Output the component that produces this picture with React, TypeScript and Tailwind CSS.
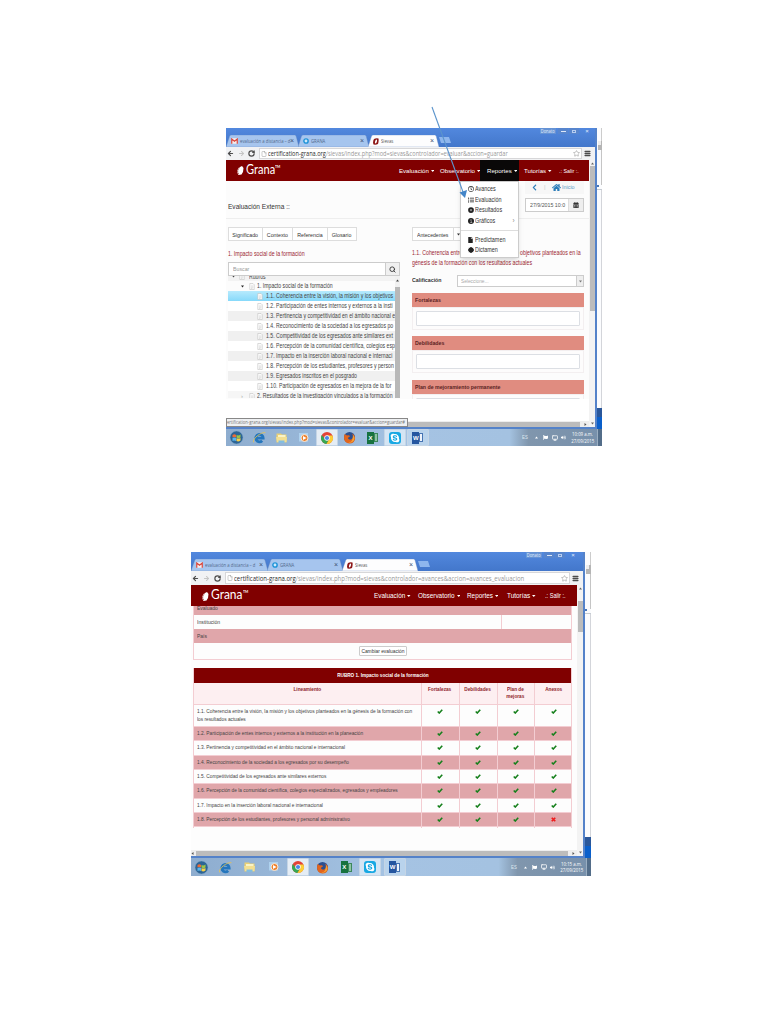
import React from 'react';
import { FaHome, FaCalendarAlt, FaSkype, FaListUl, FaFile, FaCertificate, FaChevronLeft, FaRegClock, FaFlag, FaVolumeUp } from 'react-icons/fa';
import { ArrowLeft, ArrowRight, RotateCw, Menu, Star, Search, File, Monitor } from 'lucide-react';

const cx = (...c: (string | false | undefined)[]) => c.filter(Boolean).join(' ');

/** Condensed run of text: keeps its height and narrows the glyphs. */
function T({ children, className = 'scale-x-[.87]', center }: { children: React.ReactNode; className?: string; center?: boolean }) {
  return <span className={cx('inline-block whitespace-nowrap', center ? 'origin-center' : 'origin-left', className)}>{children}</span>;
}

function Tab({ icon, label, active, className }: { icon: React.ReactNode; label: string; active?: boolean; className: string }) {
  return (
    <div className={cx('relative flex h-[12px] shrink-0 items-center', className)}>
      <svg className="absolute inset-0 h-full w-full" viewBox="0 0 100 12" preserveAspectRatio="none">
        <path d="M0 12L5 1Q6 0 7 0H94Q95 0 96 1L100 12Z" fill={active ? '#fdfdfe' : '#a6c5ee'} stroke="#6386bd" strokeWidth=".4" />
      </svg>
      <div className="relative flex w-full items-center gap-[2px] pl-[5px] pr-[5px]">
        {icon}
        <span className={cx('w-0 flex-1 font-["Open_Sans",sans-serif] text-[5.400px] leading-[8px]', active ? 'text-[#555]' : 'text-[#52698c]')}><T className="scale-x-[.79]">{label}</T></span>
        <span className="text-[7px] leading-[8px] text-[#41536f]">×</span>
      </div>
    </div>
  );
}

function GmailIcon() {
  return (
    <svg className="h-[6px] w-[7px] shrink-0" viewBox="0 0 14 11"><path d="M1 0h12v11H1z" fill="#f7eeee" /><path d="M1.500 11V1.500L7 6l5.500-4.500V11" fill="none" stroke="#d9473d" strokeWidth="2.400" /></svg>
  );
}
function RingIcon() {
  return (
    <svg className="h-[6px] w-[6px] shrink-0" viewBox="0 0 12 12"><circle cx="6" cy="6" r="4.300" fill="#cfe9fb" stroke="#1c92d8" strokeWidth="2.800" /></svg>
  );
}
function SeedIcon() {
  return (
    <svg className="h-[7px] w-[6px] shrink-0" viewBox="0 0 12 14"><path d="M2 2Q6 0 11 1Q12 6 10 12Q6 14 1 13Q-1 7 2 2Z" fill="#8d1717" /><ellipse cx="6" cy="7" rx="1.800" ry="4" transform="rotate(18 6 7)" fill="#fff" /></svg>
  );
}

function Chrome({ large, url }: { large?: boolean; url: string }) {
  return (
    <>
      <div className="flex h-[19px] items-end bg-linear-to-b from-[#5288de] to-[#4377cb]">
        <div className="flex items-end">
          <Tab icon={<GmailIcon />} label="evaluación a distancia – d" className={large ? 'w-[77px]' : 'w-[73px]'} />
          <Tab icon={<RingIcon />} label="GRANA" className={large ? '-ml-[1px] w-[76px]' : '-ml-[1px] w-[71px]'} />
          <Tab icon={<SeedIcon />} label="Sievas" active className={large ? '-ml-[1px] w-[76px]' : '-ml-[1px] w-[71px]'} />
          <svg className="mb-[4px] h-[6px] w-[13px]" viewBox="0 0 13 6"><path d="M0 0h10l2 6H2z" fill="#8eb6ed" /></svg>
        </div>
        <div className={cx('ml-auto flex h-[6px] gap-[1px] self-start text-[5px] leading-[6px] text-[#e6effc]', large ? 'mr-[3px]' : 'mr-[1px]')}>
          <span className="flex w-[16px] justify-center bg-[#6593d5] font-['Open_Sans',sans-serif]"><T center className="scale-x-[.8]">Donato</T></span>
          <span className="ml-[1px] flex w-[10px] items-end justify-center bg-[#5785cd] pb-[2px]"><i className="block h-[1px] w-[5px] bg-[#dce7f8]" /></span>
          <span className="flex w-[10px] items-center justify-center bg-[#5785cd]"><i className="block h-[3px] w-[4px] border border-[#b7cdf0]" /></span>
          <span className="w-[14px] text-center text-[6px]">×</span>
        </div>
      </div>
      <div className={cx('flex items-center bg-[#f1f2f4] text-[#4c4c4c]', large ? 'h-[14px]' : 'h-[13px]')}>
        <ArrowLeft className="ml-[1px] h-[7px] w-[7px]" strokeWidth={4} />
        <ArrowRight className="ml-[4px] h-[7px] w-[7px] text-[#c5c5c5]" strokeWidth={3.5} />
        <RotateCw className={cx('h-[7px] w-[7px]', large ? 'ml-[4px]' : 'ml-[3px]')} strokeWidth={4} />
        <div className={cx('flex flex-1 items-center border border-[#d7d7d9] bg-white', large ? 'ml-[4px] h-[12px]' : 'ml-[4px] h-[11px]')}>
          <File className="ml-[1px] h-[6px] w-[6px] shrink-0 text-[#999]" />
          <span className={cx('ml-[1px] w-0 flex-1 font-["Open_Sans","Noto_Sans",sans-serif] leading-[9px] text-[#999]', large ? 'text-[6.700px]' : 'text-[6.400px]')}>
            <T className={large ? 'scale-x-[.895]' : 'scale-x-[.878]'}><span className="text-[#2c2c2c]">certification-grana.org</span>{url}</T>
          </span>
          <Star className="mr-[1px] h-[7px] w-[7px] shrink-0 text-[#999]" />
        </div>
        <Menu className="ml-[2px] mr-[4px] h-[7px] w-[7px]" strokeWidth={5} />
      </div>
    </>
  );
}

function Logo({ large }: { large?: boolean }) {
  return (
    <div className="flex items-center pl-[11px] text-white">
      <svg className={cx('h-[9px] w-[7px]', large && 'mt-[1px]')} viewBox="0 0 14 18"><path d="M4 3L10 0L13 4L12 12L9 17L3 18L1 14L1 8Z" fill="#fff" /><path d="M4 3l2 1M2 7l2 1M1 11l2 1M2 15l2 0" stroke="#800000" /></svg>
      <span className={cx('ml-[2px] font-[Lato,sans-serif] leading-[14px]', large ? 'w-[32px]' : 'w-[29px]')}>
        <T className={large ? 'scale-x-[.92] text-[13px]' : 'scale-x-[.88] text-[12.600px]'}>Grana</T>
      </span>
      <span className="-mt-[8px] font-[Lato,sans-serif] text-[4px] leading-[5px] font-bold"><T className="scale-x-[.85]">TM</T></span>
    </div>
  );
}

function NavItem({ label, className, caret = true }: { label: string; className: string; caret?: boolean }) {
  return (
    <div className={cx('flex h-full items-center gap-[2px] whitespace-nowrap text-white', className)}>
      <span className={caret ? '' : 'origin-left scale-x-[.88]'}>{label}</span>
      {caret && <svg className="h-[2px] w-[3.500px]" viewBox="0 0 7 4"><path d="M0 0h7L3.500 4z" fill="#fff" /></svg>}
    </div>
  );
}

function Caret({ dir, className }: { dir: 'up' | 'down' | 'left' | 'right'; className?: string }) {
  const paths = { up: 'M0 5h6L3 1z', down: 'M0 1h6L3 5z', left: 'M5 0v6L1 3z', right: 'M1 0v6l4-3z' };
  return <svg className={cx('h-[3px] w-[3px] shrink-0', className)} viewBox="0 0 6 6"><path d={paths[dir]} fill="currentColor" /></svg>;
}

function WinStart() {
  return (
    <svg className="h-[15px] w-[15px]" viewBox="0 0 30 30">
      <circle cx="15" cy="15" r="13" fill="#2c6496" stroke="#7fa8c9" />
      <path d="M7 10q4-3 7 0v5q-4-2-7 0z" fill="#ee6b35" /><path d="M15 10q4 2 8-1v6q-4 2-8 0z" fill="#9cc646" />
      <path d="M7 16q4-2 7 0v6q-4-2-7 0z" fill="#58b5ec" /><path d="M15 16q4 2 8 0v5q-4 3-8 1z" fill="#fbd044" />
    </svg>
  );
}
function ExplorerE() {
  return (
    <svg className="h-[15px] w-[15px]" viewBox="0 0 28 28">
      <path d="M7 15h14a7 7 0 1 0-2 5" fill="none" stroke="#2476bd" strokeWidth="5" />
      <path d="M3 23C0 16 18 3 25 5" fill="none" stroke="#e8c352" strokeWidth="1.600" />
    </svg>
  );
}
function FoxIcon() {
  return (
    <svg className="h-[13px] w-[13px]" viewBox="0 0 26 26"><circle cx="13" cy="13" r="11" fill="#2c4f8f" /><path d="M3 6q3 1 5 3q5-2 6 2q-4 1-4 4q3 4 8 1q4-5 0-11q7 4 6 11q-2 9-11 9Q2 24 2 13z" fill="#e2651d" /><path d="M20 8q5 6 1 12q-5 5-10 3q9 0 9-15z" fill="#f4a434" /></svg>
  );
}
function ExplorerIcon() {
  return (
    <svg className="h-[12px] w-[13px]" viewBox="0 0 26 24"><path d="M3 3h9l2 2h9v16H3z" fill="#e9cf75" /><path d="M6 6h15v9H6z" fill="#f9f3c6" /><path d="M2 10h22l-1 10H4z" fill="#f3df91" /><path d="M7 17h12v5H7z" fill="#83bde0" /></svg>
  );
}
function PlayerIcon() {
  return (
    <svg className="h-[12px] w-[12px]" viewBox="0 0 24 24"><rect x="2" y="2" width="18" height="17" fill="#aed2ef" /><circle cx="13" cy="12" r="7" fill="#ee812c" stroke="#f8e9d9" strokeWidth="2" /><path d="M10 8l7 4-7 4z" fill="#fff" /></svg>
  );
}
function ChromeIcon() {
  return (
    <svg className="h-[14px] w-[14px]" viewBox="0 0 28 28"><circle cx="14" cy="14" r="12" fill="#e34337" /><path d="M3.600 8A12 12 0 0 0 13 26l5-10-9-1z" fill="#35a853" /><path d="M14 9h11a12 12 0 0 1-12 17l6-10z" fill="#fbcf38" /><circle cx="14" cy="14" r="5.500" fill="#fff" /><circle cx="14" cy="14" r="4.200" fill="#4a87e8" /></svg>
  );
}
function OfficeIcon({ letter, tone }: { letter: string; tone: 'green' | 'blue' }) {
  return (
    <div className="flex items-center">
      <span className={cx('flex h-[12px] w-[7px] items-center justify-center text-[6px] leading-[12px] font-bold text-white', tone === 'green' ? 'bg-[#17723f]' : 'bg-[#2556a0]')}>{letter}</span>
      <span className={cx('h-[9px] w-[4px] border', tone === 'green' ? 'border-[#3b875c] bg-[#8fc4a4]' : 'border-[#4674b3] bg-[#edf3fb]')} />
    </div>
  );
}

function Taskbar({ large, time }: { large?: boolean; time: string }) {
  const open = 'rounded-[1px] border border-[#c5d5e5]';
  const icons: [React.ReactNode, string][] = [
    [<WinStart />, ''],
    [<ExplorerE />, ''],
    [<ExplorerIcon />, ''],
    [<PlayerIcon />, ''],
    [<ChromeIcon />, cx(open, 'bg-[#e5edf5]')],
    [<FoxIcon />, ''],
    [<OfficeIcon letter="X" tone="green" />, ''],
    [<span className="flex h-[12px] w-[12px] items-center justify-center rounded-[3px] bg-[#18a8e3] text-white"><FaSkype className="h-[10px] w-[10px]" /></span>, cx(open, 'bg-[#d4e5f4]')],
    [<OfficeIcon letter="W" tone="blue" />, cx(open, 'bg-[#b9d3ec]')],
  ];
  return (
    <div className={cx('flex overflow-hidden bg-linear-to-r from-[#8eadcf] via-[#a5c3e3] to-[#a3c1df]', large ? 'h-[18px]' : 'h-[17px]')}>
      <div className={cx('flex', large ? '-ml-[2px]' : '-ml-[1px]')}>
        {icons.map(([icon, c], i) => (
          <div key={i} className={cx('flex justify-center', large ? 'w-[24.200px]' : 'w-[22.700px]')}>
            <div className={cx('flex w-[22px] items-center justify-center', c)}>{icon}</div>
          </div>
        ))}
      </div>
      <div className="ml-auto flex h-full w-[92px] items-center bg-linear-to-r from-[#a3c1df] via-[#8096ad] via-20% to-[#7790ab] text-[5.400px] text-white">
        <span className="ml-[12px] w-[7px] text-[#dfe7ef]"><T className="scale-x-[.8]">ES</T></span>
        <Caret dir="up" className="ml-[6px] text-white" />
        <FaFlag className="ml-[5px] h-[5px] w-[5px]" />
        <Monitor className="ml-[4px] h-[6px] w-[6px]" strokeWidth={3} />
        <FaVolumeUp className="ml-[3px] h-[5px] w-[5px]" />
        <div className="ml-auto mr-[3px] flex w-[23px] flex-col items-center font-['Open_Sans',sans-serif] text-[5.200px] leading-[6.500px]">
          <T center className="scale-x-[.84]">{time}</T><T center className="scale-x-[.84]">27/09/2015</T>
        </div>
        <i className="h-full w-[5px] border-l border-[#9aaec2] bg-[#536d89]" />
      </div>
    </div>
  );
}

function BackWindow() {
  return (
    <div className="flex flex-1 flex-col bg-[#fbfcfe]">
      <div className="h-[13px] border-r border-[#ccc]" />
      <div className="ml-[1px] flex h-[9px] items-start bg-[#b5b5b5]"><i className="h-[4px] w-[3px] bg-[#eee]" /></div>
      <div className="h-[35px] border-r border-[#c5c5c5]" />
      <i className="h-[2px] w-[2px] bg-[#4776b7]" />
      <div className="h-[3px] border-b border-[#c5cbd2]" />
      <div className="flex-1 border-r border-[#d3d5da]" />
      <div className="h-[9px] bg-[#2a579a]" />
      <div className="h-[12px] bg-[#0a5fca]" />
    </div>
  );
}

function Scrollbar({ gap, thumb }: { gap: string; thumb: string }) {
  return (
    <div className="flex w-[6px] shrink-0 flex-col items-center bg-[#f3f3f3] py-[2px] text-[#666]">
      <Caret dir="up" />
      <div className={gap} />
      <div className={cx('w-[5px] bg-[#bcbcbc]', thumb)} />
      <Caret dir="down" className="mt-auto" />
    </div>
  );
}

const tree = [
  '1.1. Coherencia entre la visión, la misión y los objetivos',
  '1.2. Participación de entes internos y externos a la insti',
  '1.3. Pertinencia y competitividad en el ámbito nacional e',
  '1.4. Reconocimiento de la sociedad a los egresados po',
  '1.5. Competitividad de los egresados ante similares ext',
  '1.6. Percepción de la comunidad científica, colegios esp',
  '1.7. Impacto en la inserción laboral nacional e internaci',
  '1.8. Percepción de los estudiantes, profesores y person',
  '1.9. Egresados inscritos en el posgrado',
  '1.10. Participación de egresados en la mejora de la for',
];

function Doc() {
  return (
    <svg className="h-[7px] w-[6px] shrink-0" viewBox="0 0 12 14">
      <path d="M1.500 1H8l2.500 2.500V13h-9z" fill="#fbfbfb" stroke="#b8b8b8" /><path d="M4 6h4.500M4 8.500h4.500M4 11h3" stroke="#c4c4c4" />
    </svg>
  );
}

function TreePanel() {
  const fit = 'scale-x-[.81]';
  return (
    <div className="flex h-[122px] overflow-hidden">
      <div className="w-[167px] overflow-hidden text-[6.400px] leading-[10px] whitespace-nowrap text-[#444]">
        <div className="-mt-[4px] flex h-[9px] items-center gap-[4px] bg-[#f3f3f3] pl-[4px]"><Caret dir="down" /><Doc /><T className={fit}>Rubros</T></div>
        <div className="flex h-[10px] items-center pl-[13px]"><Caret dir="down" className="text-[#222]" /><span className="w-[5px]" /><Doc /><span className="ml-[2px]"><T className={fit}>1. Impacto social de la formación</T></span></div>
        {tree.map((t, i) => (
          <div key={t} className={cx('flex h-[10px] items-center gap-[2.500px] pl-[29px]', i === 0 ? 'bg-linear-to-b from-[#b6eafd] to-[#86d9fa]' : i % 2 === 0 ? 'bg-[#f0f0f0]' : 'bg-white')}><Doc /><T className={fit}>{t}</T></div>
        ))}
        <div className="flex h-[10px] items-center bg-[#f6f6f6] pl-[13px]"><span className="w-[8px] shrink-0 text-[6px] text-[#aaa]">›</span><Doc /><span className="ml-[2px]"><T className={fit}>2. Resultados de la investigación vinculados a la formación</T></span></div>
      </div>
      <div className="flex w-[5px] flex-col items-center bg-[#f1f1f1] pt-[3px]"><Caret dir="up" className="text-[#444]" /><i className="mt-[5px] w-full flex-1 bg-[#b8b8b8]" /></div>
    </div>
  );
}

function Box({ title, className }: { title: string; className?: string }) {
  return (
    <div className={cx('flex flex-col', className)}>
      <div className="h-[14px] shrink-0 bg-[#e08c80] pl-[3px] text-[6.200px] leading-[14px] font-bold text-[#5a2323]"><T className="scale-x-[.845]">{title}</T></div>
      <div className="h-[23px] shrink-0 border border-[#f3eff0] bg-[#fdfcfc] px-[3px] pt-[3px]">
        <div className="h-[15px] rounded-[1px] border border-[#dcdfe4] bg-white" />
      </div>
    </div>
  );
}

function MenuEntry({ icon, label, more }: { icon: React.ReactNode; label: string; more?: boolean }) {
  return (
    <div className="flex h-[10.600px] items-center pl-[7px] leading-[8px]">
      <span className="w-[7px] text-[#222]">{icon}</span><T className="scale-x-[.86]">{label}</T>
      {more && <span className="ml-auto mr-[3px] text-[#888]">›</span>}
    </div>
  );
}

function EvaluationWindow() {
  const dot = 'h-[6px] w-[6px]';
  return (
    <section className="ml-[226px] mt-[128px] h-[318px] w-[376px] overflow-hidden font-['Liberation_Sans',Arial,sans-serif]">
      <div className="flex h-[301px]">
        <div className="flex w-[371px] flex-col border-r-2 border-b-2 border-[#5482c9]">
          <Chrome url="/sievas/index.php?mod=sievas&controlador=evaluar&accion=guardar" />
          <div className="flex flex-1">
            <div className="flex w-[363px] flex-col bg-[#fcfcfc]">
              <div className="flex h-[21px] bg-[#800000] text-[6.100px]">
                <Logo />
                <div className="ml-auto flex h-full">
                  <NavItem label="Evaluación" className="w-[41px]" />
                  <NavItem label="Observatorio" className="w-[40px]" />
                  <div className="relative">
                    <NavItem label="Reportes" className="w-[39px] bg-[#0a0808] pl-[7px]" />
                    <div className="absolute top-[21px] right-[.500px] z-10 h-[77px] w-[59px] border border-[#ccc] bg-white pt-[2px] text-[6.300px] text-[#333] shadow-md">
                      <MenuEntry icon={<FaRegClock className={dot} />} label="Avances" />
                      <MenuEntry icon={<FaListUl className={dot} />} label="Evaluación" />
                      <MenuEntry icon={<svg className={dot} viewBox="0 0 12 12"><circle cx="6" cy="6" r="4" fill="none" stroke="#222" strokeWidth="3.500" /><path d="M4 4l4 4M8 4L4 8" stroke="#222" /></svg>} label="Resultados" />
                      <MenuEntry icon={<svg className={dot} viewBox="0 0 12 12"><circle cx="6" cy="6" r="6" fill="#222" /><path d="M6 2v2M5 5h1.500v4M4.500 9h4" stroke="#fff" /></svg>} label="Gráficos" more />
                      <div className="mt-[4px] mb-[3px] border-t border-[#ddd]" />
                      <MenuEntry icon={<FaFile className="h-[6px] w-[5px]" />} label="Predictamen" />
                      <MenuEntry icon={<FaCertificate className={dot} />} label="Dictamen" />
                    </div>
                  </div>
                  <NavItem label="Tutorías" className="w-[40px] pl-[5px]" />
                  <NavItem label=".: Salir :." caret={false} className="w-[30px]" />
                </div>
              </div>
              <div className="flex h-[38px] border-b border-[#eee] pl-[2px] pr-[5px] text-[7.400px] text-[#333]">
                <span className="mt-[21px] leading-[10px]"><T className="scale-x-[.885]">Evaluación Externa ::</T></span>
                <div className="ml-auto flex w-[59px] flex-col">
                  <div className="flex h-[13px] items-center bg-[#f7f7f7] text-[6px] text-[#2c7db9]">
                    <FaChevronLeft className="ml-[6px] h-[7px] w-[7px]" /><span className="ml-[6px] text-[#ccc]">|</span><FaHome className="ml-[6px] h-[9px] w-[9px]" /><span className="ml-[1px] w-[14px]"><T className="scale-x-[.9] text-[#5e9ac6]">Inicio</T></span>
                  </div>
                  <div className="mt-[4px] flex h-[14px] w-[59px] items-center border border-[#ccc] bg-white text-[6.200px] text-[#555]">
                    <span className="w-0 flex-1 pl-[4px]"><T className="scale-x-[.85]">27/9/2015 10:0</T></span>
                    <span className="flex h-full w-[15px] shrink-0 items-center justify-center border-l border-[#ddd] bg-[#eee]"><FaCalendarAlt className="h-[6px] w-[6px] text-[#333]" /></span>
                  </div>
                </div>
              </div>
              <div className="flex h-[180px] overflow-hidden pl-[2px]">
                <div className="w-[172px] shrink-0">
                  <div className="mt-[8px] flex h-[14px] w-[129px] divide-x divide-[#ddd] border border-[#ddd] bg-white text-[6.200px] leading-[13px] text-[#333]">
                    <span className="flex w-[34px] justify-center"><T center className="scale-x-[.85]">Significado</T></span><span className="flex w-[30px] justify-center"><T center className="scale-x-[.85]">Contexto</T></span><span className="flex w-[35px] justify-center"><T center className="scale-x-[.85]">Referencia</T></span><span className="flex flex-1 justify-center"><T center className="scale-x-[.85]">Glosario</T></span>
                  </div>
                  <div className="mt-[7px] h-[14px] text-[6.400px] leading-[11px] text-[#9b2632]"><T className="scale-x-[.82]">1. Impacto social de la formación</T></div>
                  <div className="flex h-[14px] items-center border border-[#ccc] bg-white pl-[4px] text-[6.200px] text-[#999]">
                    <T className="scale-x-[.85]">Buscar</T><span className="ml-auto flex h-full w-[14px] items-center justify-center border-l border-[#ccc] bg-[#f0f0f0]"><Search className="h-[7px] w-[7px] text-[#333]" strokeWidth={3} /></span>
                  </div>
                  <TreePanel />
                </div>
                <div className="ml-[12px] flex w-[172px] shrink-0 flex-col">
                  <div className="mt-[8px] flex h-[14px] w-[50px] shrink-0 items-center border border-[#ddd] bg-white text-[6.200px] text-[#333]"><span className="h-full w-[41px] border-r border-[#ddd] pl-[4px] leading-[13px]"><T className="scale-x-[.83]">Antecedentes</T></span><Caret dir="down" className="ml-[3px]" /></div>
                  <div className="mt-[7px] shrink-0 text-[6.400px] leading-[10px] text-[#9b2632]"><div><T className="scale-x-[.82]">1.1. Coherencia entre la visión, la misión y los objetivos planteados en la</T></div><div><T className="scale-x-[.82]">génesis de la formación con los resultados actuales</T></div></div>
                  <div className="mt-[6px] flex h-[12px] shrink-0 items-center">
                    <span className="w-[45px] shrink-0 text-[6.200px] leading-[8px] font-bold text-[#333]"><T className="scale-x-[.85]">Calificación</T></span>
                    <div className="mt-[2px] flex h-[12px] flex-1 items-center border border-[#ccc] bg-white pl-[3px] text-[6px] text-[#aaa]"><T className="scale-x-[.8]">Seleccione...</T><span className="ml-auto flex h-full w-[7px] items-center justify-center border-l border-[#ccc] bg-[#eee] text-[#777]"><Caret dir="down" /></span></div>
                  </div>
                  <Box title="Fortalezas" className="mt-[7px]" />
                  <Box title="Debilidades" className="mt-[6px]" />
                  <Box title="Plan de mejoramiento permanente" className="mt-[7px]" />
                </div>
              </div>
              <div className="flex min-h-0 flex-1 flex-col justify-end bg-white">
                <div className="flex h-[9px] items-end">
                  <div className="h-[9px] w-[182px] shrink-0 border border-[#888] bg-[#eef0f2] font-['Open_Sans',sans-serif] text-[5px] leading-[7px] text-[#777]"><div className="w-0"><T className="scale-x-[.83]">ertification-grana.org/sievas/index.php?mod=sievas&controlador=evaluar&accion=guardar#</T></div></div>
                  <div className="flex h-[6px] flex-1 items-center bg-[#eee] text-[#555]"><i className="mr-[4px] h-[5px] flex-1 bg-[#bcbcbc]" /><Caret dir="right" className="mr-[2px]" /></div>
                </div>
              </div>
            </div>
            <Scrollbar gap="h-[1px] shrink-0" thumb="h-[145px]" />
          </div>
        </div>
        <BackWindow />
      </div>
      <Taskbar time="10:09 a.m." />
    </section>
  );
}

const rows = [
  ['1.1. Coherencia entre la visión, la misión y los objetivos planteados en la génesis de la formación con', 'los resultados actuales'],
  ['1.2. Participación de entes internos y externos a la institución en la planeación'],
  ['1.3. Pertinencia y competitividad en el ámbito nacional e internacional'],
  ['1.4. Reconocimiento de la sociedad a los egresados por su desempeño'],
  ['1.5. Competitividad de los egresados ante similares externos'],
  ['1.6. Percepción de la comunidad científica, colegios especializados, egresados y empleadores'],
  ['1.7. Impacto en la inserción laboral nacional e internacional'],
  ['1.8. Percepción de los estudiantes, profesores y personal administrativo'],
];
const heads = [['Lineamiento'], ['Fortalezas'], ['Debilidades'], ['Plan de', 'mejoras'], ['Anexos']];
const cols = 'grid grid-cols-[227.500px_38px_38px_37.500px_37px] divide-x divide-[#f3cdd2]';

function ProgressWindow() {
  return (
    <section className="ml-[191px] mt-[106px] h-[324px] w-[400px] overflow-hidden font-['Liberation_Sans',Arial,sans-serif]">
      <div className="flex h-[306px]">
        <div className="flex w-[394px] flex-col border-r-2 border-b-2 border-[#5482c9]">
          <Chrome large url="/sievas/index.php?mod=sievas&controlador=avances&accion=avances_evaluacion" />
          <div className="flex flex-1">
            <div className="flex w-[386px] flex-col bg-[#fdfdfd]">
              <div className="flex h-[21px] bg-[#800000] text-[6.400px]">
                <Logo large />
                <div className="ml-auto flex h-full">
                  <NavItem label="Evaluación" className="w-[44px]" />
                  <NavItem label="Observatorio" className="w-[49px]" />
                  <NavItem label="Reportes" className="w-[40px]" />
                  <NavItem label="Tutorías" className="w-[38px]" />
                  <NavItem label=".: Salir :." caret={false} className="w-[32px]" />
                </div>
              </div>
              <div className="ml-[2px] w-[379px] border-x border-b border-[#f3cdd2] text-[6px] text-[#444]">
                <div className="h-[9px] overflow-hidden bg-[#e0a6aa] pl-[3px] leading-[4px]"><T className="scale-x-[.83]">Evaluado</T></div>
                <div className="flex h-[14px] leading-[14px]"><span className="w-[308px] border-r border-[#f3cdd2] pl-[3px]"><T className="scale-x-[.86]">Institución</T></span></div>
                <div className="h-[14px] bg-[#e0a6aa] pl-[3px] leading-[14px]"><T className="scale-x-[.83]">País</T></div>
                <div className="flex h-[16px] items-center justify-center"><span className="flex h-[10px] w-[48px] justify-center rounded-[1px] border border-[#ccc] bg-white text-[6.100px] leading-[8px] text-[#333]"><T center className="scale-x-[.8]">Cambiar evaluación</T></span></div>
              </div>
              <div className="mt-[8px] ml-[2px] w-[379px] border-x border-[#f3cdd2] text-[5.900px] text-[#444]">
                <div className="h-[14.500px] bg-[#800000] text-center font-bold leading-[14.500px] text-white"><T center className="scale-x-[.79]">RUBRO 1. Impacto social de la formación</T></div>
                <div className={cx(cols, 'h-[21.500px] bg-[#fdeff1] leading-[7.500px] font-bold text-[#8f2229]')}>
                  {heads.map((h) => <div key={h[0]} className="flex flex-col items-center pt-[3px]">{h.map((l) => <T key={l} center className="scale-x-[.8]">{l}</T>)}</div>)}
                </div>
                {rows.map((r, i) => (
                  <div key={r[0]} className={cx(cols, 'border-t border-[#f3cdd2]', i === 0 ? 'h-[22px]' : 'h-[14.350px]', i % 2 ? 'bg-[#e0a6aa]' : 'bg-[#fdfdfd]')}>
                    <div className="min-w-0 pl-[3px] pt-[3px] leading-[7.500px]">{r.map((l) => <div key={l}><T className="scale-x-[.813]">{l}</T></div>)}</div>
                    {[0, 1, 2, 3].map((c) => (
                      <div key={c} className="flex justify-center pt-[4px]">
                        {i === 7 && c === 3 ? (
                          <svg className="h-[5px] w-[5px]" viewBox="0 0 10 10"><path d="M1.500 1.500l7 7M8.500 1.500l-7 7" stroke="#ef1c1c" strokeWidth="3.400" /></svg>
                        ) : (
                          <svg className="h-[5px] w-[6px]" viewBox="0 0 12 10"><path d="M1.500 5L4.500 8L10.500 1.500" fill="none" stroke="#16801c" strokeWidth="3.200" /></svg>
                        )}
                      </div>
                    ))}
                  </div>
                ))}
                <div className={cx(cols, 'h-[2px] border-t border-[#f3cdd2]')}><i /><i /><i /><i /><i /></div>
              </div>
              <div className="mt-auto flex h-[6px] items-center bg-[#eee] text-[#555]"><Caret dir="left" /><i className="mx-[2px] h-[5px] flex-1 bg-[#bcbcbc]" /><Caret dir="right" className="mr-[2px] ml-[2px]" /></div>
            </div>
            <Scrollbar gap="h-[11px] shrink-0" thumb="h-[31px]" />
          </div>
        </div>
        <BackWindow />
      </div>
      <Taskbar large time="10:15 a.m." />
    </section>
  );
}

export default function App() {
  return (
    <main className="relative flex h-[1012px] w-[782px] flex-col overflow-hidden bg-white">
      <EvaluationWindow />
      <ProgressWindow />
      <svg className="absolute top-[105px] left-[430px] z-20 h-[95px] w-[40px]" viewBox="0 0 40 95">
        <path d="M2 2L33 87" stroke="#5b94cc" strokeWidth="1.100" />
        <path d="M29.500 87.500L37 85L35 93Z" fill="#4385c8" />
      </svg>
    </main>
  );
}
